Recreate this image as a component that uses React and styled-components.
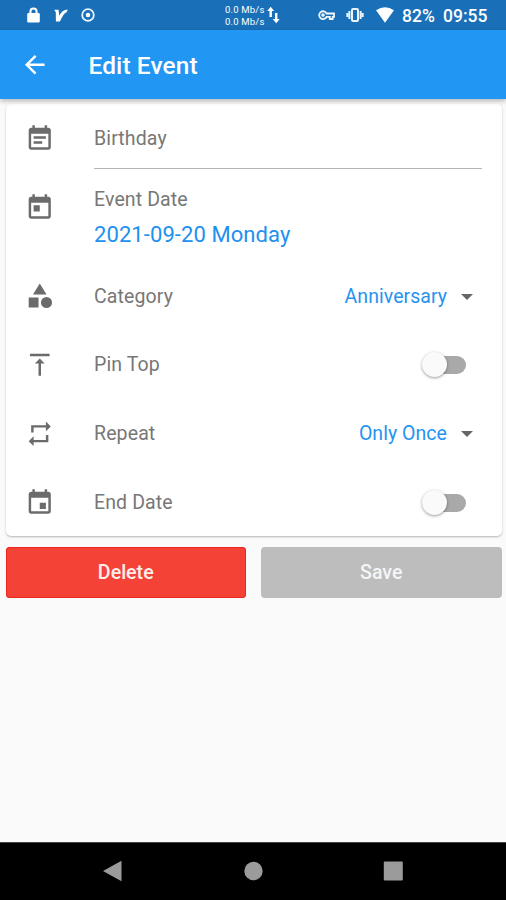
import React from "react";
import styled, { createGlobalStyle } from "styled-components";

const GlobalStyle = createGlobalStyle`
  * { box-sizing: border-box; }
  body { margin: 0; background: #fafafa; font-family: Roboto, "Liberation Sans", sans-serif; }
  button { font-family: inherit; border: 0; padding: 0; }
`;

const Screen = styled.div`
  width: 506px;
  height: 900px;
  display: flex;
  flex-direction: column;
  overflow: hidden;
  background: #fafafa;
`;

const StatusBar = styled.div`
  height: 30px;
  flex: none;
  display: flex;
  align-items: center;
  background: #1a70b8;
  color: #fff;
  svg { display: block; flex: none; }
`;

const StatusIcon = styled.svg`
  width: ${(p) => p.$w}px;
  height: ${(p) => p.$h}px;
  margin-left: ${(p) => p.$gap}px;
`;

const Speed = styled.div`
  margin-left: 130px;
  width: 42px;
  padding-top: 1px;
  font-size: 9.5px;
  line-height: 11.5px;
  letter-spacing: 0.2px;
  white-space: nowrap;
`;

const StatusText = styled.span`
  margin-left: ${(p) => p.$gap}px;
  width: ${(p) => p.$w}px;
  white-space: nowrap;
  font-size: 17.5px;
  font-weight: 500;
  line-height: 20px;
  padding-top: 2px;
`;

const AppBar = styled.header`
  height: 69px;
  flex: none;
  display: flex;
  align-items: center;
  padding-left: 20px;
  background: #2196f3;
  color: #fff;
  position: relative;
  z-index: 1;
  box-shadow: 0 2px 5px rgba(0, 0, 0, 0.28);
`;

const Title = styled.h1`
  margin: 3px 0 0 39px;
  font-size: 24.4px;
  font-weight: 500;
  line-height: 30px;
  letter-spacing: 0.13px;
`;

const Content = styled.main`
  flex: 1;
  padding: 5px 4.5px 0 5.5px;
`;

const Card = styled.section`
  height: 432px;
  border-radius: 5px;
  background: #fff;
  box-shadow: 0 1px 2px rgba(0, 0, 0, 0.28);
`;

const Row = styled.div`
  height: ${(p) => p.$h || 68.8}px;
  display: flex;
  align-items: ${(p) => (p.$top ? "flex-start" : "center")};
  padding: 0 20px 0 19.5px;
`;

const Glyph = styled.svg`
  display: block;
  flex: none;
  width: 29.5px;
  height: 29.5px;
  fill: ${(p) => p.$color || "#6b6b6b"};
  margin-top: ${(p) => p.$mt || 0}px;
`;

const Label = styled.span`
  font-size: 19.5px;
  line-height: 24px;
  letter-spacing: 0.12px;
  color: #777;
  white-space: nowrap;
`;

const RowLabel = styled(Label)`
  margin-left: 39.5px;
  padding-top: 1px;
  flex: 1;
`;

const Field = styled.div`
  margin-left: 39.5px;
  flex: 1;
  height: 65px;
  padding-top: 23px;
  border-bottom: 1.5px solid #b4b4b4;
`;

const DateBlock = styled.div`
  margin-left: 39.5px;
  display: flex;
  flex-direction: column;
  padding-top: 9px;
`;

const DateValue = styled.span`
  margin-top: 10px;
  font-size: 22px;
  line-height: 26px;
  letter-spacing: 0.08px;
  color: #2190ee;
  white-space: nowrap;
`;

const Choice = styled.span`
  padding-top: 1px;
  font-size: 19.5px;
  line-height: 24px;
  letter-spacing: 0.04px;
  color: #2693f0;
`;

const Caret = styled.svg`
  display: block;
  width: 12px;
  height: 6px;
  margin: 1px 9px 0 13.5px;
  fill: #666;
`;

const Track = styled.span`
  width: 41px;
  height: 18px;
  border-radius: 9px;
  margin-right: 15.5px;
  background: #a9a9a9;
  display: flex;
  align-items: center;
`;

const Knob = styled.span`
  flex: none;
  width: 25px;
  height: 25px;
  margin-left: -3px;
  border-radius: 50%;
  background: #fafafa;
  box-shadow: 0 1px 3px rgba(0, 0, 0, 0.4);
`;

const Actions = styled.div`
  display: grid;
  grid-template-columns: 240.5px 240.5px;
  column-gap: 15px;
  margin-top: 11px;
`;

const ActionButton = styled.button`
  height: 51px;
  border-radius: 4px;
  background: ${(p) => (p.$danger ? "#f44336" : "#bdbdbd")};
  box-shadow: ${(p) => (p.$danger ? "inset 0 0 0 1px #e8281c" : "none")};
  color: ${(p) => (p.$danger ? "#ffeeec" : "#f5f5f5")};
  font-size: 19.6px;
  font-weight: 500;
`;

const NavBar = styled.nav`
  height: 58px;
  flex: none;
  display: flex;
  align-items: center;
  justify-content: space-between;
  padding: 0 102px 2px 102px;
  background: #000;
  border-top: 1px solid #444;
`;

const NavIcon = styled.svg`
  display: block;
  width: 22px;
  height: 22px;
  fill: #9b9b9b;
`;

const calendar =
  "M19 3h-1V1h-2v2H8V1H6v2H5c-1.11 0-1.99.9-1.99 2L3 19c0 1.1.89 2 2 2h14c1.1 0 2-.9 2-2V5c0-1.1-.9-2-2-2zm0 16H5V8h14v11z";

const paths = {
  note: calendar + "M17 10H7v2h10zM14 14H7v2h7z",
  today: calendar + "M7 10h5v5H7z",
  event: calendar + "M12 12h5v5h-5z",
  category: "M12 2l-5.5 9h11zM3 13.5h8v8H3zM22 17.5a4.5 4.5 0 1 1-9 0a4.5 4.5 0 1 1 9 0z",
  top: "M8 11h3v10h2V11h3l-4-4-4 4zM4 3v2h16V3H4z",
  repeat: "M7 7h10v3l4-4-4-4v3H5v6h2V7zm10 10H7v-3l-4 4 4 4v-3h12v-6h-2v4z",
  back: "M20 11H7.83l5.59-5.59L12 4l-8 8 8 8 1.41-1.41L7.83 13H20v-2z",
};

const Icon = ({ name, mt, color }) => (
  <Glyph viewBox="0 0 24 24" $mt={mt} $color={color}>
    <path d={paths[name]} />
  </Glyph>
);

const SelectRow = ({ icon, label, value }) => (
  <Row>
    <Icon name={icon} />
    <RowLabel>{label}</RowLabel>
    <Choice>{value}</Choice>
    <Caret viewBox="0 0 12 6"><path d="M0 0h12L6 6z" /></Caret>
  </Row>
);

const SwitchRow = ({ icon, label }) => (
  <Row>
    <Icon name={icon} />
    <RowLabel>{label}</RowLabel>
    <Track role="switch" aria-checked="false"><Knob /></Track>
  </Row>
);

const Status = () => (
  <StatusBar>
    <StatusIcon $w={13} $h={16} $gap={27} viewBox="0 0 13 16" fill="#fff">
      <path fillRule="evenodd" d="M1.5 6H2.4V4.6a4.1 4.1 0 0 1 8.2 0V6h.9q1.3 0 1.3 1.3v6.900q0 1.300-1.300 1.300H1.500Q.2 15.500 .2 14.200V7.300Q.2 6 1.500 6zM4.500 6h4V4.500a2 2 0 0 0-4 0z" />
    </StatusIcon>
    <StatusIcon $w={14} $h={13} $gap={14} viewBox="0 0 14 13" fill="#fff">
      <path d="M.2 .8H4.6L5.2 6.8Q8 1.2 13.7 .6L12.6 3.2Q10 3.6 5.900 12.600H1.900L1.800 3.200z" />
    </StatusIcon>
    <StatusIcon $w={14} $h={14} $gap={13} viewBox="0 0 14 14">
      <circle cx="7" cy="7" r="5.8" fill="none" stroke="#e9f3fb" strokeWidth="1.8" />
      <circle cx="7" cy="7" r="2.3" fill="#fff" />
    </StatusIcon>
    <Speed>
      <div>0.0 Mb/s</div>
      <div>0.0 Mb/s</div>
    </Speed>
    <StatusIcon $w={13} $h={18} $gap={0} viewBox="0 0 13 18" fill="#fff">
      <path d="M3.7 .8L7.2 5H4.9V11H2.5V5H.2zM9.2 17.2L5.7 13H8V7h2.4v6h2.3z" />
    </StatusIcon>
    <StatusIcon $w={17} $h={11} $gap={38} viewBox="0 0 17 11" fill="none" stroke="#f0f7fd" strokeWidth="1.8">
      <path d="M8.600 3.500H16V6.800H14.700V9H11.800V6.800H8.600A3.900 3.900 0 1 1 8.600 3.500z" />
      <circle cx="5" cy="5.100" r=".9" />
    </StatusIcon>
    <StatusIcon $w={18} $h={14} $gap={11} viewBox="0 0 18 14" fill="none" stroke="#e9f3fb" strokeWidth="2">
      <rect x="6" y="1" width="6" height="12" rx="1" />
      <path d="M3.400 3v8M14.600 3v8M1.300 5v4M16.700 5v4" />
    </StatusIcon>
    <StatusIcon $w={18} $h={16} $gap={12} viewBox="0 0 18 16" fill="#fff">
      <path d="M0 3.2Q9-2.8 18 3.2L9 15.8z" />
    </StatusIcon>
    <StatusText $gap={8} $w={33}>82%</StatusText>
    <StatusText $gap={8} $w={46}>09:55</StatusText>
  </StatusBar>
);

export default function App() {
  return (
    <Screen>
      <GlobalStyle />
      <Status />
      <AppBar>
        <Icon name="back" color="#fff" />
        <Title>Edit Event</Title>
      </AppBar>
      <Content>
        <Card>
          <Row $h={75} $top>
            <Icon name="note" mt={20} />
            <Field><Label>Birthday</Label></Field>
          </Row>
          <Row $h={82.8} $top>
            <Icon name="today" mt={13.8} />
            <DateBlock>
              <Label>Event Date</Label>
              <DateValue>2021-09-20 Monday</DateValue>
            </DateBlock>
          </Row>
          <SelectRow icon="category" label="Category" value="Anniversary" />
          <SwitchRow icon="top" label="Pin Top" />
          <SelectRow icon="repeat" label="Repeat" value="Only Once" />
          <SwitchRow icon="event" label="End Date" />
        </Card>
        <Actions>
          <ActionButton $danger>Delete</ActionButton>
          <ActionButton disabled>Save</ActionButton>
        </Actions>
      </Content>
      <NavBar>
        <NavIcon viewBox="0 0 22 22"><path d="M1 11L19.5 .8V21.2z" /></NavIcon>
        <NavIcon viewBox="0 0 22 22"><circle cx="11.5" cy="11" r="9.2" /></NavIcon>
        <NavIcon viewBox="0 0 22 22"><rect x="1.8" y="1.5" width="19" height="19" rx="1" /></NavIcon>
      </NavBar>
    </Screen>
  );
}
